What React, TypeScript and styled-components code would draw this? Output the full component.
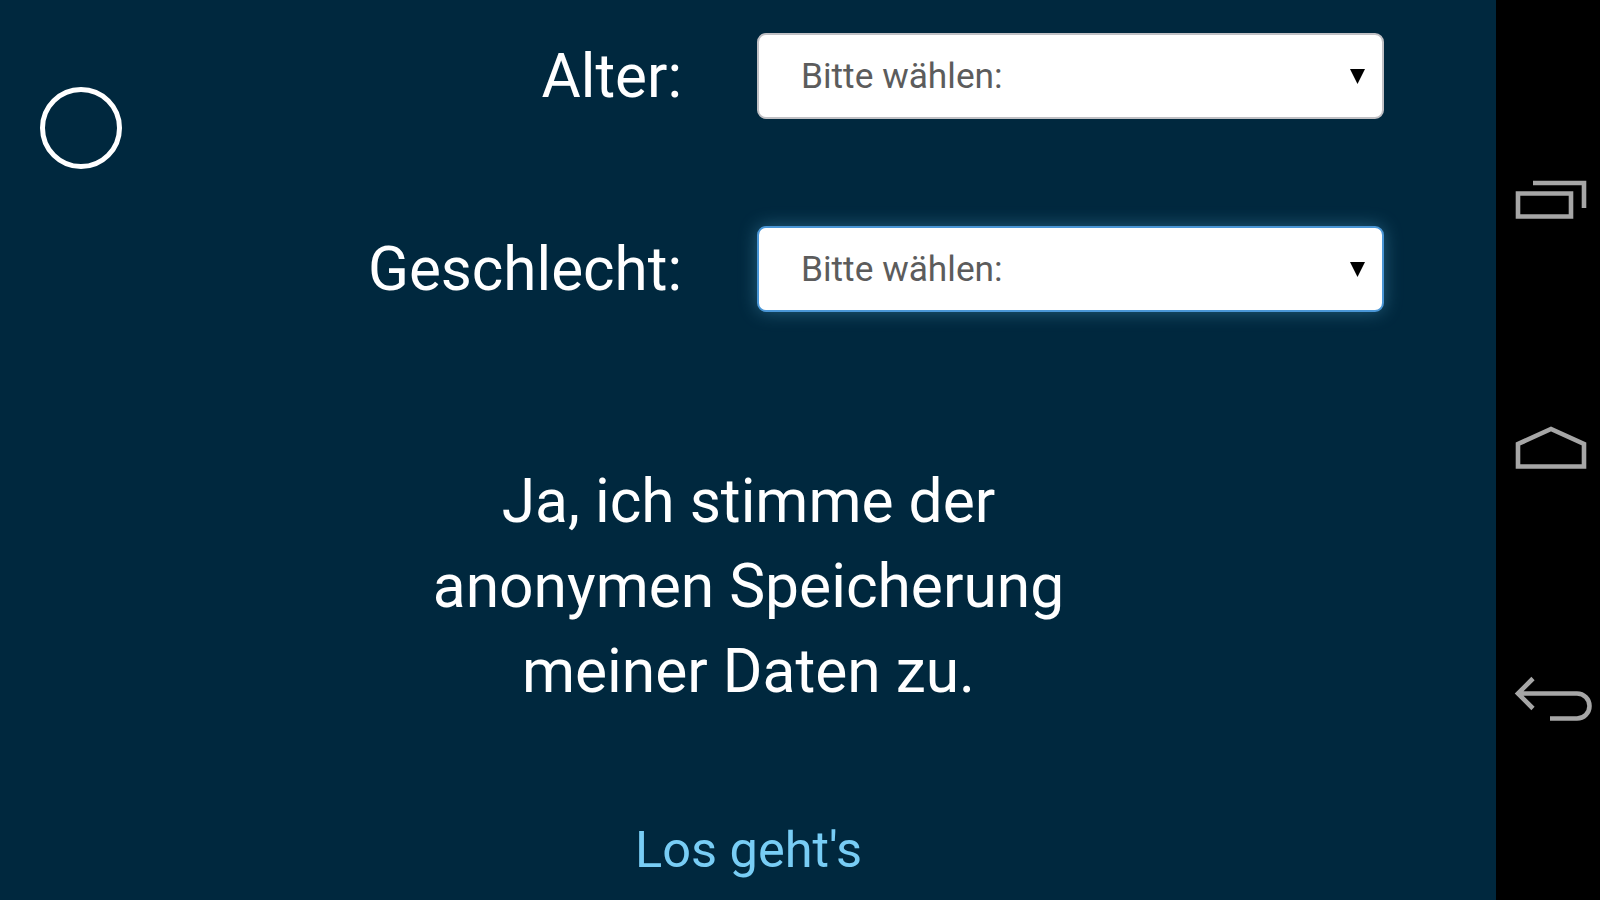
import React from "react";
import styled, { createGlobalStyle } from "styled-components";

const Global = createGlobalStyle`
  body { margin: 0; background: #00283e; }
  * { box-sizing: border-box; }
`;
const Screen = styled.div`
  display: flex; width: 1600px; height: 900px; overflow: hidden;
  font-family: Roboto, "Liberation Sans", sans-serif; color: #fff; background: #00283e;
`;
const Content = styled.main`
  width: 1496px; height: 900px; padding: 33px 112px 0 40px;
  display: grid; grid-template-columns: 82px 1fr; align-content: start;
`;
const Ring = styled.div`
  width: 82px; height: 82px; margin-top: 54px; border: 5px solid #fff; border-radius: 50%;
`;
const Form = styled.form`display: flex; flex-direction: column; gap: 107px;`;
const Field = styled.label`
  height: 86px; display: flex; align-items: center; justify-content: flex-end; gap: 75px;
`;
const Label = styled.span`
  padding-top: 2px; font-size: 60.2px; line-height: 86px; white-space: nowrap;
`;
const Select = styled.div<{ $focus?: boolean }>`
  width: 627px; height: 86px; padding: 0 17px 0 42px; border-radius: 9px; background: #fff;
  display: flex; align-items: center; justify-content: space-between;
  border: 2px solid ${p => (p.$focus ? "#4a96d6" : "#c0c0c4")};
  box-shadow: ${p => (p.$focus ? "0 0 18px rgba(80, 160, 200, .45)" : "none")};
`;
const Value = styled.span`
  color: #5c5c5c; font-size: 35.3px; line-height: 44px;
`;
const Consent = styled.p`
  grid-column: 1 / -1; margin: 147px 0 0 73px; text-align: center;
  font-size: 60.5px; line-height: 85px;
`;
const Start = styled.a`
  grid-column: 1 / -1; margin: 101px 0 0 73px; text-align: center;
  font-size: 50.5px; line-height: 70px; color: #78cdf5;
`;
const NavBar = styled.nav`
  width: 104px; height: 900px; padding-top: 170px; background: #000;
  display: flex; flex-direction: column; gap: 190px;
`;
const NavIcon = styled.svg`
  width: 104px; height: 60px; fill: none; stroke: #a6a6a6; stroke-width: 4.6px;
`;

export default function App() {
  return (
    <Screen>
      <Global />
      <Content>
        <Ring />
        <Form>
          {["Alter:", "Geschlecht:"].map((t, i) => (
            <Field key={t}>
              <Label>{t}</Label>
              <Select $focus={i === 1}>
                <Value>Bitte wählen:</Value>
                <svg width="15" height="15" viewBox="0 0 15 15"><path d="M0 0H15L7.5 15Z" /></svg>
              </Select>
            </Field>
          ))}
        </Form>
        <Consent>Ja, ich stimme der<br />anonymen Speicherung<br />meiner Daten zu.</Consent>
        <Start>Los geht's</Start>
      </Content>
      <NavBar>
        <NavIcon viewBox="0 0 104 60">
          <path d="M22 23.5H75V46.5H22ZM37 13H88V38" />
        </NavIcon>
        <NavIcon viewBox="0 0 104 60">
          <path d="M22 46.5V24L55 9L88 24V46.5Z" />
        </NavIcon>
        <NavIcon viewBox="0 0 104 60">
          <path d="M37 8.5L22 23.5L37 38.5M22 23.5H81A12.5 12.5 0 0 1 81 48.5H54" />
        </NavIcon>
      </NavBar>
    </Screen>
  );
}
